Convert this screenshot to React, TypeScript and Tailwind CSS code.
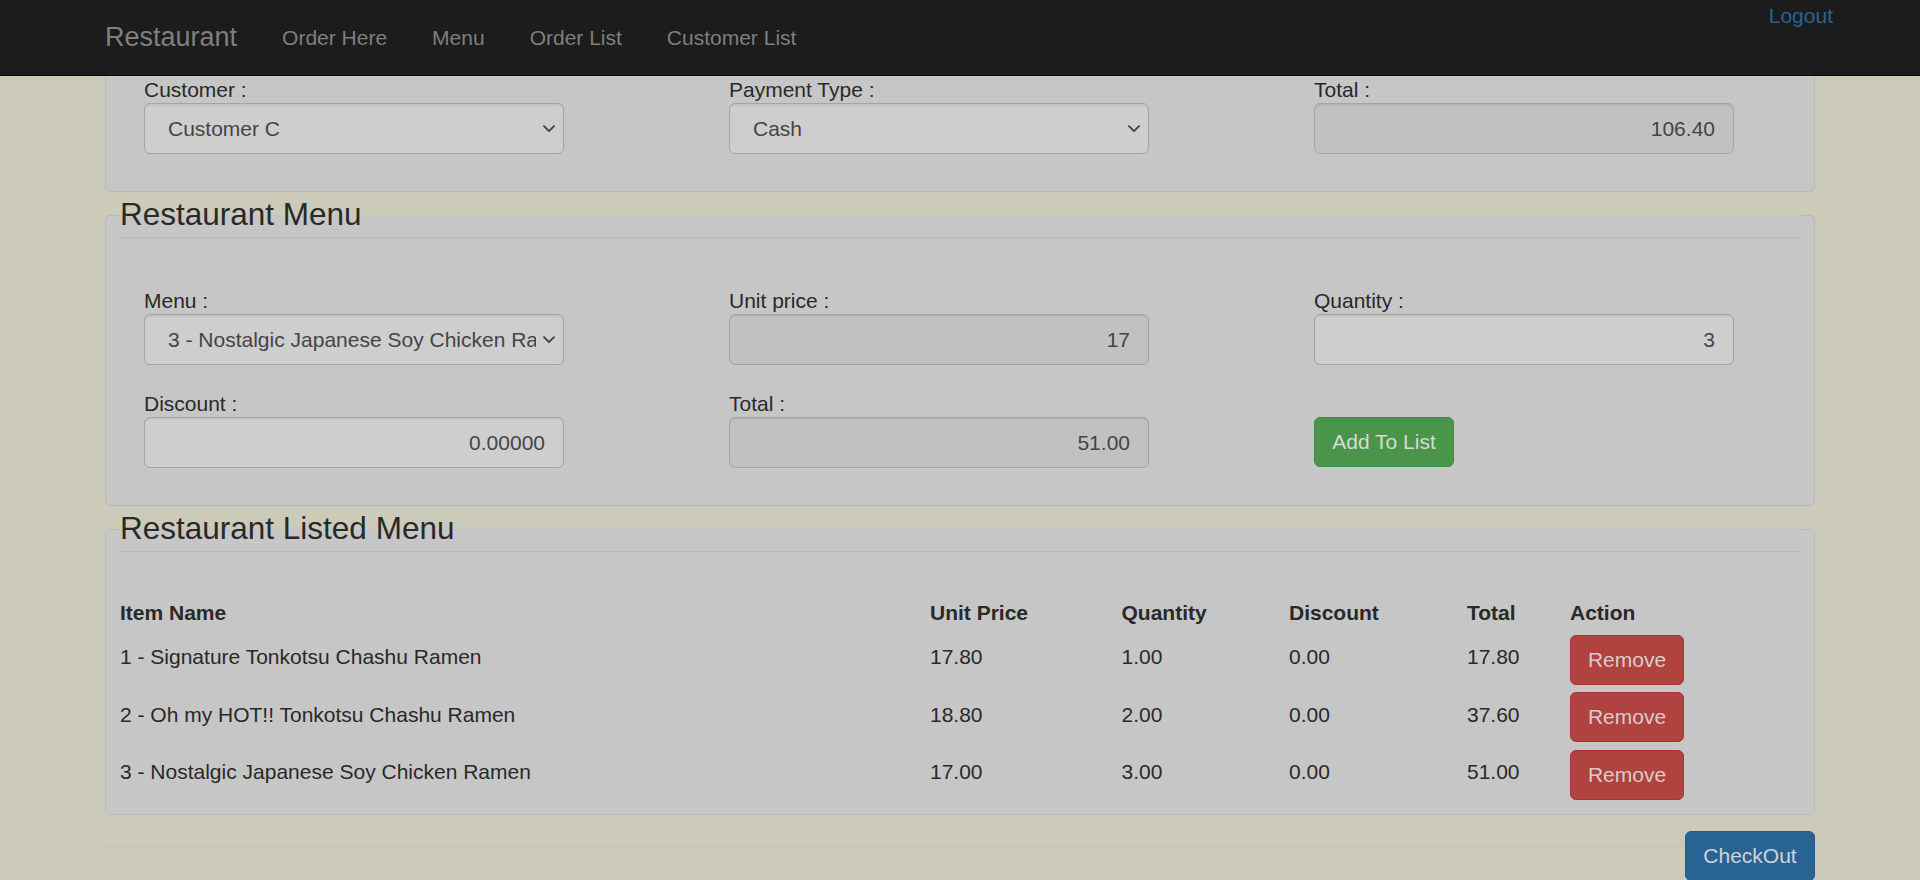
import React from "react";

const inputBase =
  "block h-[51px] w-[420px] rounded-[6px] border border-[#a5a5a5] px-[18px] text-right text-[21px] text-[#454545] shadow-[inset_0_1.5px_1.5px_rgba(0,0,0,0.075)] outline-none";

function Label({ children }: { children?: React.ReactNode }) {
  return <div className="h-[27px] whitespace-nowrap text-[21px] leading-[27px] text-[#292929]">{children}</div>;
}

function Chevron() {
  return (
    <svg
      className="pointer-events-none absolute right-[9px] top-1/2 -translate-y-1/2"
      width="12"
      height="8"
      viewBox="0 0 12 8"
      fill="none"
    >
      <path d="M1 1.2 L6 6.2 L11 1.2" stroke="#444444" strokeWidth="1.9" strokeLinecap="round" strokeLinejoin="round" />
    </svg>
  );
}

function Select({ value, options }: { value: string; options: string[] }) {
  return (
    <div className="relative h-[51px] w-[420px]">
      <select
        defaultValue={value}
        className="block h-[51px] w-[420px] appearance-none overflow-hidden whitespace-nowrap rounded-[6px] border border-[#a5a5a5] bg-[#cecece] pl-[23px] pr-[27px] text-[21px] text-[#454545] shadow-[inset_0_1.5px_1.5px_rgba(0,0,0,0.075)] outline-none"
      >
        {options.map((o) => (
          <option key={o} value={o}>
            {o}
          </option>
        ))}
      </select>
      <Chevron />
    </div>
  );
}

function Field({ label, children }: { label?: string; children: React.ReactNode }) {
  return (
    <div className="flex flex-col">
      <Label>{label}</Label>
      {children}
    </div>
  );
}

const rows = [
  { name: "1 - Signature Tonkotsu Chashu Ramen", price: "17.80", qty: "1.00", disc: "0.00", total: "17.80" },
  { name: "2 - Oh my HOT!! Tonkotsu Chashu Ramen", price: "18.80", qty: "2.00", disc: "0.00", total: "37.60" },
  { name: "3 - Nostalgic Japanese Soy Chicken Ramen", price: "17.00", qty: "3.00", disc: "0.00", total: "51.00" },
];

const menuOptions = [
  "1 - Signature Tonkotsu Chashu Ramen",
  "2 - Oh my HOT!! Tonkotsu Chashu Ramen",
  "3 - Nostalgic Japanese Soy Chicken Ramen",
];

export default function App() {
  return (
    <div className="h-[880px] overflow-hidden bg-[#cccbb9] font-['Liberation_Sans',Arial,Helvetica,sans-serif] text-[#292929]">
      {/* Navbar */}
      <nav className="flex h-[76px] items-start border-b border-[#070707] bg-[#1c1c1c]">
        <span className="ml-[105px] text-[27px] leading-[75px] text-[#7f7f7f]">Restaurant</span>
        <span className="ml-[45px] text-[21px] leading-[75px] text-[#7f7f7f]">Order Here</span>
        <span className="ml-[45px] text-[21px] leading-[75px] text-[#7f7f7f]">Menu</span>
        <span className="ml-[45px] text-[21px] leading-[75px] text-[#7f7f7f]">Order List</span>
        <span className="ml-[45px] text-[21px] leading-[75px] text-[#7f7f7f]">Customer List</span>
        <span className="ml-auto mr-[87px] mt-[1px] text-[21px] leading-[30px] text-[#296394]">Logout</span>
      </nav>

      <main className="ml-[105px] w-[1710px]">
        {/* Order panel (top scrolled under navbar) */}
        <div className="rounded-b-[6px] border-x border-b border-[#b8b8b8] bg-[#c6c6c6] pb-[37px] pl-[38px]">
          <div className="grid grid-cols-[420px_420px_420px] gap-x-[165px]">
            <Field label="Customer :">
              <Select value="Customer C" options={["Customer A", "Customer B", "Customer C"]} />
            </Field>
            <Field label="Payment Type :">
              <Select value="Cash" options={["Cash", "Card"]} />
            </Field>
            <Field label="Total :">
              <input readOnly value="106.40" className={inputBase + " bg-[#c1c1c1]"} />
            </Field>
          </div>
        </div>

        {/* Restaurant Menu */}
        <fieldset className="rounded-[6px] border border-[#b8b8b8] bg-[#c6c6c6] px-[14px] pb-[37px]">
          <legend className="w-full border-b border-[#b9b9b9] text-[31.5px] leading-[45px] text-[#292929]">
            Restaurant Menu
          </legend>
          <div className="ml-[24px] mt-[49px] grid grid-cols-[420px_420px_420px] gap-x-[165px] gap-y-[25px]">
            <Field label="Menu :">
              <Select value={menuOptions[2]} options={menuOptions} />
            </Field>
            <Field label="Unit price :">
              <input readOnly value="17" className={inputBase + " bg-[#c1c1c1]"} />
            </Field>
            <Field label="Quantity :">
              <input readOnly value="3" className={inputBase + " bg-[#cecece]"} />
            </Field>
            <Field label="Discount :">
              <input readOnly value="0.00000" className={inputBase + " bg-[#cecece]"} />
            </Field>
            <Field label="Total :">
              <input readOnly value="51.00" className={inputBase + " bg-[#c1c1c1]"} />
            </Field>
            <Field>
              <button className="h-[50px] w-[140px] rounded-[6px] border border-[#3e8d3e] bg-[#4b954b] text-[21px] text-[#d2dcd2]">
                Add To List
              </button>
            </Field>
          </div>
        </fieldset>

        {/* Restaurant Listed Menu */}
        <fieldset className="rounded-[6px] border border-[#b8b8b8] bg-[#c6c6c6] px-[14px] pb-[10.5px]">
          <legend className="w-full border-b border-[#b9b9b9] text-[31.5px] leading-[45px] text-[#292929]">
            Restaurant Listed Menu
          </legend>
          <div className="mt-[43px] grid h-[36px] grid-cols-[810px_191.5px_167.5px_178px_103px_1fr] items-center text-[21px] font-bold leading-[30px]">
            <div>Item Name</div>
            <div>Unit Price</div>
            <div>Quantity</div>
            <div>Discount</div>
            <div>Total</div>
            <div>Action</div>
          </div>
          {rows.map((r) => (
            <div
              key={r.name}
              className="grid h-[57.5px] grid-cols-[810px_191.5px_167.5px_178px_103px_1fr] text-[21px] leading-[30px]"
            >
              <div className="pt-[11px]">{r.name}</div>
              <div className="pt-[11px]">{r.price}</div>
              <div className="pt-[11px]">{r.qty}</div>
              <div className="pt-[11px]">{r.disc}</div>
              <div className="pt-[11px]">{r.total}</div>
              <div className="flex items-center">
                <button className="h-[50px] w-[114px] rounded-[6px] border border-[#ac332f] bg-[#b04340] text-[21px] text-[#d8cccc]">
                  Remove
                </button>
              </div>
            </div>
          ))}
        </fieldset>

        <div className="flex items-start">
          <div className="mt-[31px] flex-1 border-t border-[#c1c1c1]" />
          <button className="mt-[16px] h-[50px] w-[130px] rounded-[6px] border border-[#255885] bg-[#296394] text-[21px] text-[#cdd4da]">
            CheckOut
          </button>
        </div>
      </main>
    </div>
  );
}
